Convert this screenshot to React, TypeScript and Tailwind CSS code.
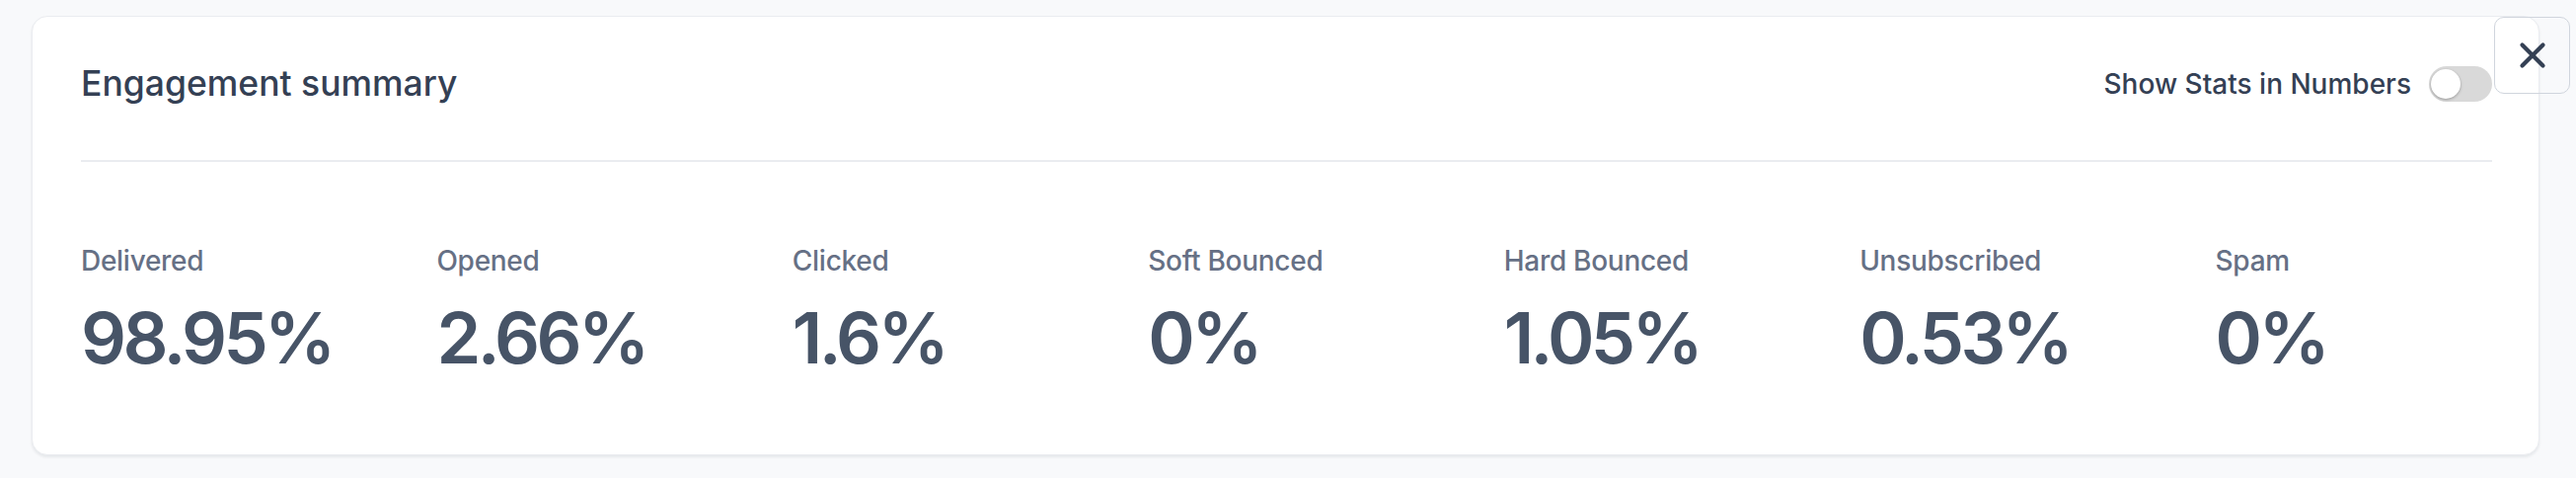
import React from 'react';
import { X } from 'lucide-react';

const stats = [
  { label: 'Delivered', value: '98.95%' },
  { label: 'Opened', value: '2.66%' },
  { label: 'Clicked', value: '1.6%' },
  { label: 'Soft Bounced', value: '0%' },
  { label: 'Hard Bounced', value: '1.05%' },
  { label: 'Unsubscribed', value: '0.53%' },
  { label: 'Spam', value: '0%' },
];

const Toggle: React.FC = () => (
  <div className="relative h-[36px] w-[64px] rounded-full bg-[#d9d9d9]">
    <div className="absolute left-[2px] top-[3px] h-[30px] w-[30px] rounded-full bg-white shadow-[0_1px_3px_rgba(0,0,0,0.3)]" />
  </div>
);

export default function App() {
  return (
    <div className="relative min-h-[484px] w-full bg-[#f8f9fb] pl-[32px] pr-[37px] pt-[16px] font-['Inter',sans-serif]">
      {/* Card */}
      <div className="rounded-[16px] border border-[#eaecf0] bg-white pl-[49px] pr-[47px] pt-[50px] pb-[82px] shadow-[0_2px_3px_rgba(16,24,40,0.08)]">
        {/* Header */}
        <div className="flex h-[36px] items-center justify-between">
          <h2 className="text-[35.5px] font-medium leading-[36px] text-[#344054]">Engagement summary</h2>
          <div className="flex items-center gap-[18px]">
            <span className="text-[28px] font-medium leading-[36px] text-[#344054]">Show Stats in Numbers</span>
            <Toggle />
          </div>
        </div>

        <div className="mt-[59px] h-[2px] w-full bg-[#eaecf0]" />

        {/* Stats */}
        <div className="mt-[80px] grid grid-cols-7 gap-x-[80px]">
          {stats.map((s) => (
            <div key={s.label} className="flex flex-col">
              <span className="text-[28px] font-medium leading-[40px] tracking-[-0.01em] text-[#667085]">{s.label}</span>
              <span className="mt-[22px] text-[72px] font-semibold leading-[72px] tracking-[-0.05em] text-[#475467]">
                {s.value}
              </span>
            </div>
          ))}
        </div>
      </div>

      {/* Close button */}
      <button className="absolute right-[6px] top-[17px] flex h-[78px] w-[77px] items-center justify-center rounded-[10px] border-[1.5px] border-[#d0d5dd] text-[#344054]">
        <X size={42} strokeWidth={2.4} />
      </button>
    </div>
  );
}
